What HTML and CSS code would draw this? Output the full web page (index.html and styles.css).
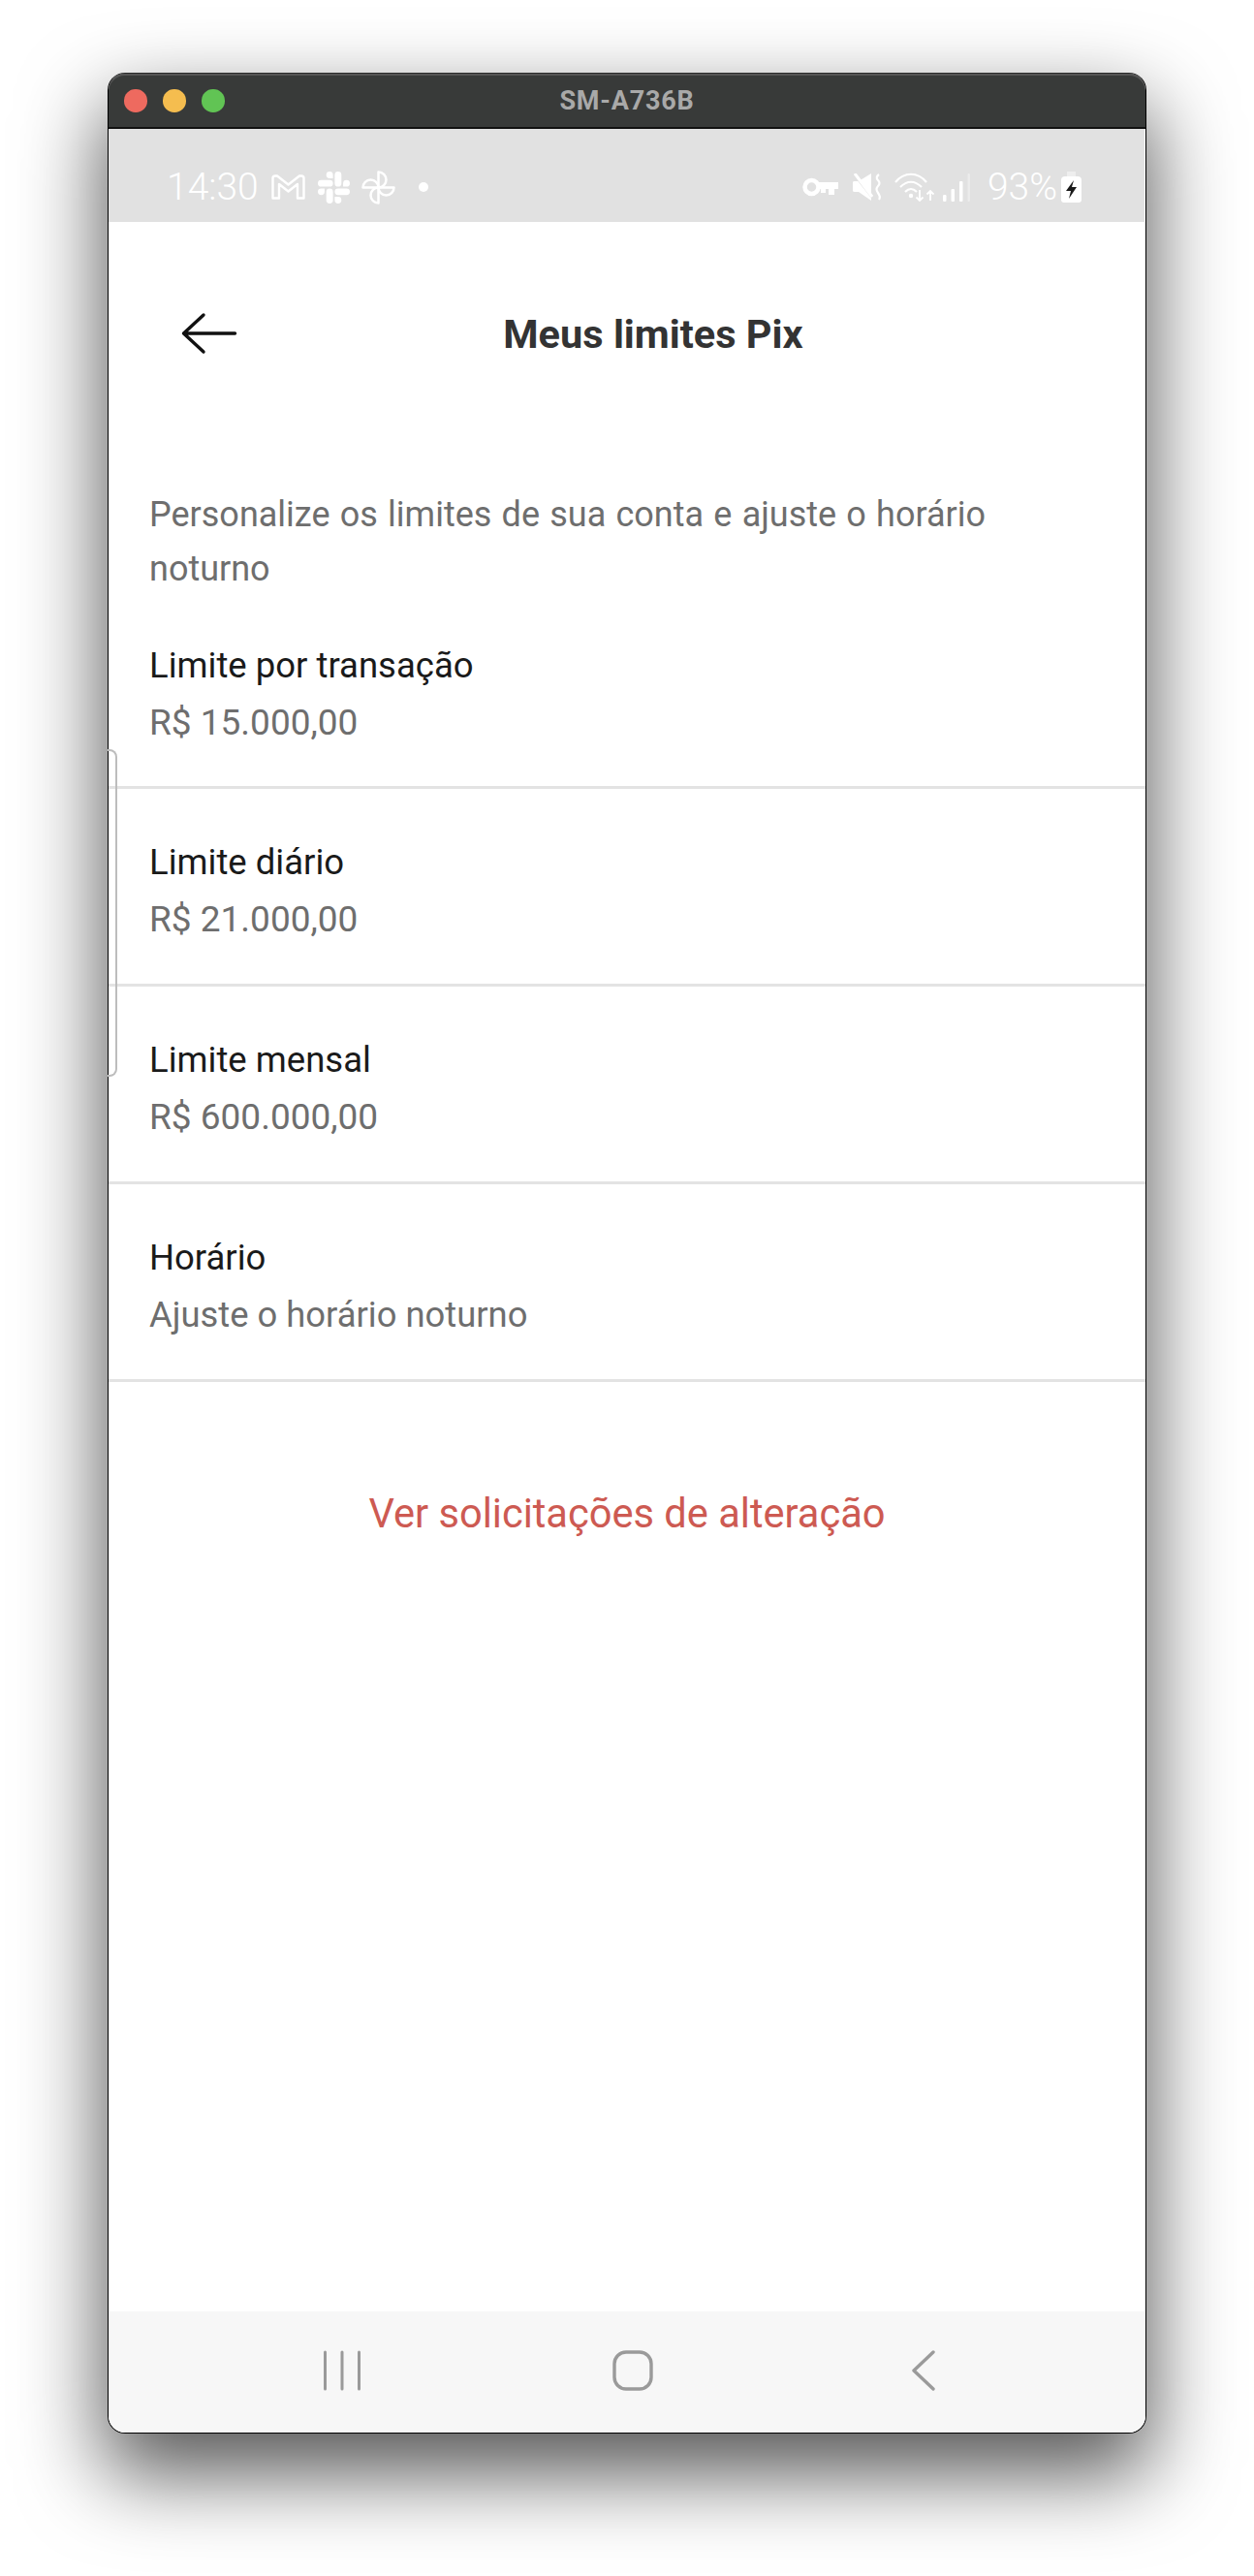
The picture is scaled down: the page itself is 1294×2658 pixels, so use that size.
FILE: index.html
```html
<!DOCTYPE html>
<html lang="pt-BR">
<head>
<meta charset="utf-8">
<title>SM-A736B</title>
<link rel="stylesheet" href="styles.css">
</head>
<body>
<div class="window">
  <header class="titlebar">
    <div class="lights"><span class="light red"></span><span class="light yellow"></span><span class="light green"></span></div>
    <div class="wintitle">SM-A736B</div>
  </header>
  <div class="statusbar">
    <div class="status-left">
      <span class="clock">14:30</span>
      <svg class="ic ic-gmail" viewBox="0 0 35 26"><path d="M1.500 24.500V4Q1.500 1.500 4 1.500H6L17.500 10.500 29 1.500H31Q33.500 1.500 33.500 4V24.500H27V10L17.500 17.500 8 10V24.500Z" fill="none" stroke="#fff" stroke-width="2.400" stroke-linejoin="round"/></svg>
      <svg class="ic ic-slack" viewBox="0 0 24 24" fill="#fff"><path d="M5.042 15.165a2.528 2.528 0 0 1-2.52 2.523A2.528 2.528 0 0 1 0 15.165a2.527 2.527 0 0 1 2.522-2.52h2.52v2.52zM6.313 15.165a2.527 2.527 0 0 1 2.521-2.52 2.527 2.527 0 0 1 2.521 2.52v6.313A2.528 2.528 0 0 1 8.834 24a2.528 2.528 0 0 1-2.521-2.522v-6.313zM8.834 5.042a2.528 2.528 0 0 1-2.521-2.52A2.528 2.528 0 0 1 8.834 0a2.528 2.528 0 0 1 2.521 2.522v2.52H8.834zM8.834 6.313a2.528 2.528 0 0 1 2.521 2.521 2.528 2.528 0 0 1-2.521 2.521H2.522A2.528 2.528 0 0 1 0 8.834a2.528 2.528 0 0 1 2.522-2.521h6.312zM18.956 8.834a2.528 2.528 0 0 1 2.522-2.521A2.528 2.528 0 0 1 24 8.834a2.528 2.528 0 0 1-2.522 2.521h-2.522V8.834zM17.688 8.834a2.528 2.528 0 0 1-2.523 2.521 2.527 2.527 0 0 1-2.52-2.521V2.522A2.527 2.527 0 0 1 15.165 0a2.528 2.528 0 0 1 2.523 2.522v6.312zM15.165 18.956a2.528 2.528 0 0 1 2.523 2.522A2.528 2.528 0 0 1 15.165 24a2.527 2.527 0 0 1-2.52-2.522v-2.522h2.52zM15.165 17.688a2.527 2.527 0 0 1-2.52-2.523 2.526 2.526 0 0 1 2.52-2.52h6.313A2.527 2.527 0 0 1 24 15.165a2.528 2.528 0 0 1-2.522 2.523h-6.313z"/></svg>
      <svg class="ic ic-pin" viewBox="0 0 35 35" fill="none" stroke="#fff" stroke-width="2.500" stroke-linejoin="round"><path d="M17.500 17.500V1.500A8 8 0 0 1 17.500 17.500Z"/><path d="M17.500 17.500H1.500A8 8 0 0 1 17.500 17.500Z"/><path d="M17.500 17.500V33.500A8 8 0 0 1 17.500 17.500Z"/><path d="M17.500 17.500H33.500A8 8 0 0 1 17.500 17.500Z"/></svg>
      <span class="dot"></span>
    </div>
    <div class="status-right">
      <svg class="ic ic-key" viewBox="0 0 37 20"><circle cx="9.500" cy="10" r="7" fill="none" stroke="#fff" stroke-width="4.500"/><path d="M16 5H37V12H33V18H27V12H24V16H19V12H16Z" fill="#fff"/></svg>
      <svg class="ic ic-mute" viewBox="0 0 31 28"><path d="M0 9Q0 8 2 8H6L19 0V28L6 19H2Q0 19 0 18Z" fill="#fff"/><path d="M3 3L21 26" stroke="#e1e1e1" stroke-width="2.500"/><path d="M2 0L20 24" stroke="#fff" stroke-width="3"/><path d="M27 1Q23 4 26 7T26 13 26 20 27 27" fill="none" stroke="#fff" stroke-width="2.200"/></svg>
      <svg class="ic ic-wifi" viewBox="0 0 41 30" fill="none" stroke="#fff" stroke-width="2.200"><path d="M1 10C10 -1 24 -1 33 10"/><path d="M6 15C13 8 21 8 28 15"/><path d="M11 20C15 16 19 16 23 20"/><circle cx="17" cy="24" r="2.200" fill="#fff" stroke="none"/><path d="M26 18V29M22.500 25.500L26 29 29.500 25.500M37 29V19M33.500 22.500L37 19 40.500 22.500" stroke-width="1.800"/></svg>
      <svg class="ic ic-signal" viewBox="0 0 28 29" fill="#fff"><rect x="0" y="22" width="3.500" height="7" rx="1.200"/><rect x="8.500" y="16" width="3.500" height="13" rx="1"/><rect x="17" y="8" width="3.500" height="21" rx="1"/><rect x="25.500" y="0" width="2.500" height="29" rx="1" opacity=".35"/></svg>
      <span class="battery-text">93%</span>
      <svg class="ic ic-batt" viewBox="0 0 21 32"><path d="M6 0H15V6H6Z" fill="#fff" opacity=".45"/><path d="M4 5H17Q21 5 21 9V29Q21 32 18 32H3Q0 32 0 29V9Q0 5 4 5Z" fill="#fff"/><path d="M13 9L5 20H10L8 28 16 16H11Z" fill="#1a1a1a"/></svg>
    </div>
  </div>
  <main class="screen">
    <div class="appbar">
      <svg class="back" viewBox="0 0 60 44" fill="none" stroke="#111" stroke-width="3.400" stroke-linecap="round" stroke-linejoin="round"><path d="M56.500 22H3.500M24 3L3.500 22 24 41"/></svg>
      <h1 class="apptitle">Meus limites Pix</h1>
    </div>
    <p class="intro">Personalize os limites de sua conta e ajuste o horário noturno</p>
    <div class="row first"><div class="row-label">Limite por transação</div><div class="row-value">R$ 15.000,00</div></div>
    <div class="row"><div class="row-label">Limite diário</div><div class="row-value">R$ 21.000,00</div></div>
    <div class="row"><div class="row-label">Limite mensal</div><div class="row-value">R$ 600.000,00</div></div>
    <div class="row"><div class="row-label">Horário</div><div class="row-value row-value-text">Ajuste o horário noturno</div></div>
    <a class="link">Ver solicitações de alteração</a>
  </main>
  <nav class="navbar">
    <svg class="nav-ic" viewBox="0 0 42 42" fill="none" stroke="#9a9a9a" stroke-width="3" stroke-linecap="round"><path d="M3.500 2V40M21 2V40M38.500 2V40"/></svg>
    <svg class="nav-ic" viewBox="0 0 42 42" fill="none" stroke="#9a9a9a" stroke-width="3.400"><rect x="2" y="2" width="38" height="38" rx="12"/></svg>
    <svg class="nav-ic" viewBox="0 0 42 42" fill="none" stroke="#9a9a9a" stroke-width="3.400" stroke-linecap="round" stroke-linejoin="round"><path d="M31 2L11 21 31 40"/></svg>
  </nav>
  <div class="edge-handle"></div>
</div>
</body>
</html>
```
FILE: styles.css
```css
* { box-sizing: border-box; }
html, body { margin: 0; height: 100%; background: #fff; }
body { padding: 75px 111px 147px; font-family: Roboto, "Liberation Sans", sans-serif; overflow: hidden; }
.window { position: relative; height: 2436px; display: flex; flex-direction: column; background: #fff; border: 1px solid #000; border-top-color: #2a2a2a; border-radius: 18px; box-shadow: 0 38px 85px 4px rgba(0,0,0,.66); }
.titlebar { height: 57px; flex: none; display: flex; align-items: center; justify-content: center; position: relative; background: #383a39; border-bottom: 2px solid #111; border-radius: 17px 17px 0 0; box-shadow: inset 0 2px 0 #555; }
.lights { position: absolute; left: 16px; top: 16px; display: flex; gap: 16.500px; }
.light { width: 23.500px; height: 23.500px; border-radius: 50%; }
.red { background: #ee6a5f; }
.yellow { background: #f5bd4f; }
.green { background: #61c454; }
.wintitle { color: #a9a9a9; font: 700 27px Roboto, sans-serif; letter-spacing: .8px; }
.statusbar { height: 96px; flex: none; display: flex; align-items: center; justify-content: space-between; background: #e1e1e1; padding: 24px 65px 0 60px; margin-right: 1px; }
.status-left, .status-right { display: flex; align-items: center; }
.clock, .battery-text { color: #fff; font-size: 39px; font-weight: 300; line-height: 1; }
.ic { display: block; flex: none; }
.ic-gmail { width: 35px; height: 26px; margin-left: 13px; }
.ic-slack { width: 33px; height: 33px; margin-left: 13px; }
.ic-pin { width: 35px; height: 35px; margin-left: 12px; }
.dot { width: 10px; height: 10px; border-radius: 50%; background: #fff; margin-left: 24px; }
.ic-key { width: 37px; height: 20px; margin-right: 15px; }
.ic-mute { width: 31px; height: 28px; margin-right: 12px; }
.ic-wifi { width: 41px; height: 30px; margin-right: 9px; }
.ic-signal { width: 28px; height: 29px; margin-right: 18px; }
.ic-batt { width: 21px; height: 32px; margin-left: 4px; }
.screen { flex: 1; display: flex; flex-direction: column; min-height: 0; }
.appbar { height: 230px; flex: none; display: flex; align-items: center; justify-content: center; position: relative; padding-left: 54px; }
.back { position: absolute; left: 74px; top: 50%; width: 60px; height: 44px; transform: translateY(-50%); }
.apptitle { margin: 0; font-size: 41.500px; font-weight: 700; color: #333; }
.intro { margin: 44px 0 0; padding: 0 100px 0 42px; font-size: 36px; word-spacing: 1.300px; line-height: 56px; color: #6e6e6e; }
.row { height: 204px; flex: none; padding: 46px 42px 0; border-bottom: 3px solid #e3e3e3; }
.row.first { height: 199px; padding-top: 42px; }
.row-label { font-size: 36.500px; line-height: 60px; color: #1a1a1a; }
.row-value { font-size: 37px; line-height: 58px; color: #6e6e6e; }
.row-value-text { font-size: 36.400px; }
.link { margin-top: 111px; text-align: center; font-size: 41.600px; color: #cd5a52; }
.navbar { height: 125px; flex: none; display: flex; align-items: center; justify-content: center; gap: 258px; background: #f7f7f7; border-radius: 0 0 17px 17px; padding: 0 0 4px 11px; }
.nav-ic { width: 42px; height: 42px; display: block; }
.edge-handle { position: absolute; left: -1px; top: 697px; width: 10px; height: 338px; border: 2px solid #bdbdbd; border-left: 0; border-radius: 0 8px 8px 0; }
```
